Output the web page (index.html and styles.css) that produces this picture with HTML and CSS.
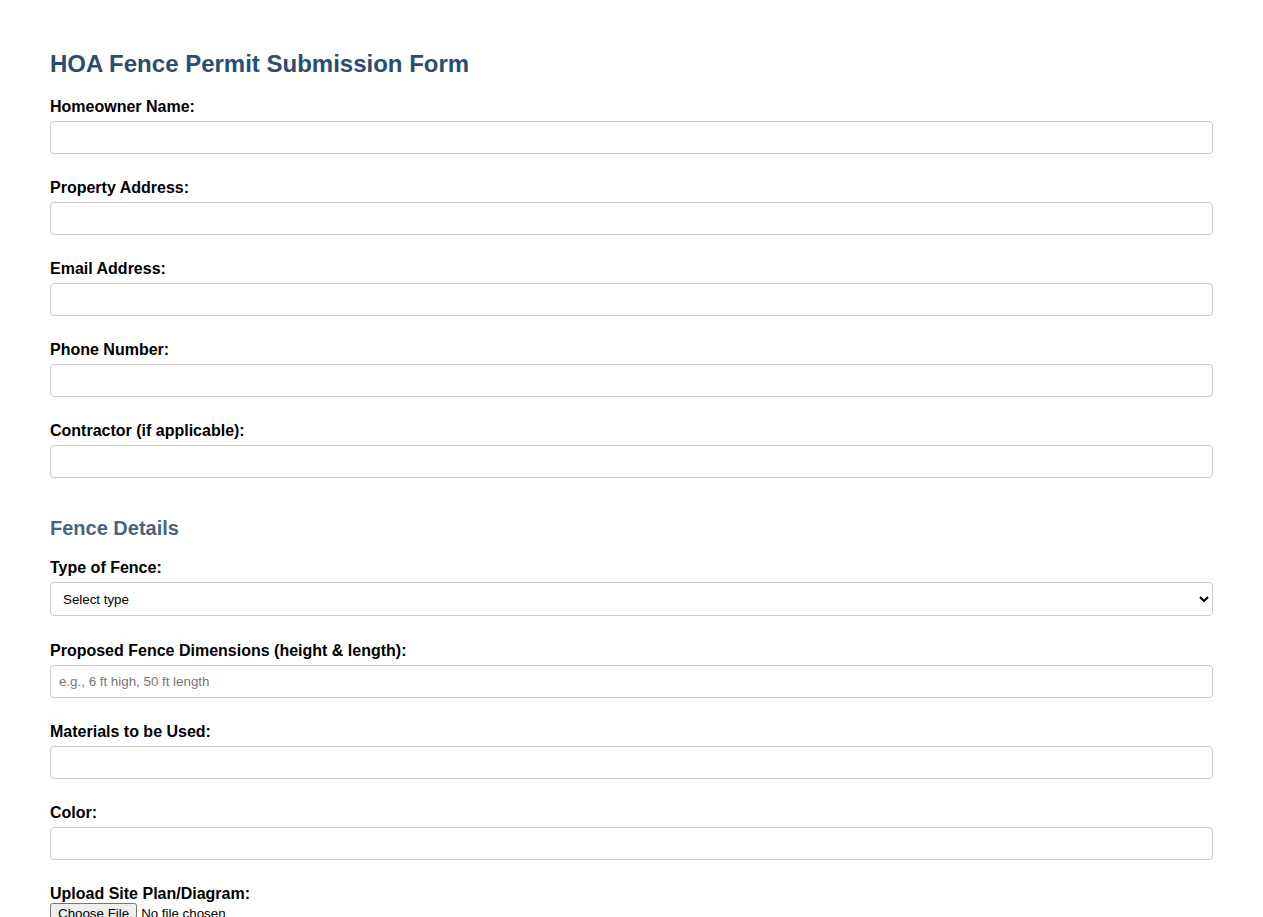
FILE: index.html
```html
<!DOCTYPE html>
<html lang="en">
<head>
<meta charset="utf-8">
<title>HOA Fence Permit Submission Form</title>
<link rel="stylesheet" href="styles.css">
</head>
<body>
<div class="container">
  <h1 class="title">HOA Fence Permit Submission Form</h1>
  <form class="form">
    <div class="form-group">
      <label for="name">Homeowner Name:</label>
      <input type="text" id="name" class="field">
    </div>
    <div class="form-group">
      <label for="address">Property Address:</label>
      <input type="text" id="address" class="field">
    </div>
    <div class="form-group">
      <label for="email">Email Address:</label>
      <input type="email" id="email" class="field">
    </div>
    <div class="form-group">
      <label for="phone">Phone Number:</label>
      <input type="tel" id="phone" class="field">
    </div>
    <div class="form-group">
      <label for="contractor">Contractor (if applicable):</label>
      <input type="text" id="contractor" class="field">
    </div>

    <h2 class="section-title">Fence Details</h2>
    <div class="form-group group-select">
      <label for="type">Type of Fence:</label>
      <select id="type" class="field select">
        <option>Select type</option>
        <option>Wood</option>
        <option>Vinyl</option>
        <option>Wrought Iron</option>
        <option>Chain Link</option>
      </select>
    </div>
    <div class="form-group">
      <label for="dims">Proposed Fence Dimensions (height &amp; length):</label>
      <input type="text" id="dims" class="field" placeholder="e.g., 6 ft high, 50 ft length">
    </div>
    <div class="form-group">
      <label for="materials">Materials to be Used:</label>
      <input type="text" id="materials" class="field">
    </div>
    <div class="form-group">
      <label for="color">Color:</label>
      <input type="text" id="color" class="field">
    </div>
    <div class="form-group">
      <label for="plan" class="label-file">Upload Site Plan/Diagram:</label>
      <input type="file" id="plan" class="file">
    </div>
  </form>
</div>
</body>
</html>
```

FILE: styles.css
```css
html, body {
  margin: 0;
  padding: 0;
  background: #ffffff;
}

body {
  font-family: "Liberation Sans", Arial, sans-serif;
  color: #000;
}

.container {
  padding: 50px 50px 40px 50px;
}

.title {
  margin: 0 0 20px 0;
  font-size: 24px;
  line-height: 28px;
  font-weight: bold;
  color: #2b4c73;
}

.form-group {
  margin-bottom: 25px;
}

.group-select {
  margin-bottom: 26px;
}

label {
  display: block;
  font-size: 16px;
  line-height: 18px;
  font-weight: bold;
  margin-bottom: 5px;
}

.label-file {
  margin-bottom: 0;
}

.field {
  display: block;
  width: 100%;
  box-sizing: border-box;
  height: 33px;
  padding: 8px;
  border: 1px solid #cccccc;
  border-radius: 4px;
  font-family: "Liberation Sans", Arial, sans-serif;
  font-size: 13.33px;
  background: #fff;
  color: #000;
}

.field::placeholder {
  color: #757575;
}

.select {
  height: 34px;
  margin-top: 1px;
}

.section-title {
  margin: 39px 0 19px 0;
  font-size: 20px;
  line-height: 23px;
  font-weight: bold;
  color: #4a6382;
}

.file {
  font-family: "Liberation Sans", Arial, sans-serif;
  font-size: 13.33px;
}
```
